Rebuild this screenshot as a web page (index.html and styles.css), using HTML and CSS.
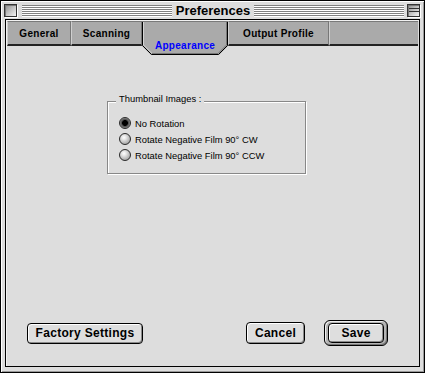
FILE: index.html
```html
<!DOCTYPE html>
<html>
<head>
<meta charset="utf-8">
<link rel="stylesheet" href="styles.css">
</head>
<body>
<div class="window">
  <div class="titlebar">
    <span class="closebox"></span>
    <span class="stripes"></span>
    <span class="title">Preferences</span>
    <span class="stripes"></span>
    <span class="zoombox"></span>
  </div>
  <div class="panel">
    <div class="tabs">
      <div class="tab w1">General</div>
      <div class="tab w2">Scanning</div>
      <div class="tab sel">
        <svg class="selshape" width="86" height="35" viewBox="0 0 86 35">
          <polygon points="0,0 86,0 86,25 77,34 9,34 0,25" fill="#aaaaaa"/>
          <line x1="0" y1="0.5" x2="86" y2="0.5" stroke="#7a7a7a" stroke-width="1"/>
          <polyline points="0.5,1 0.5,24.5 9.5,33.5 76.5,33.5 85.5,24.5 85.5,1" fill="none" stroke="#000" stroke-width="1"/>
          <polyline points="1.5,1 1.5,24 10,32.5" fill="none" stroke="#d4d4d4" stroke-width="1"/>
          <polyline points="10,32.5 76,32.5 84.5,24 84.5,1" fill="none" stroke="#777" stroke-width="1"/>
        </svg>
        <span class="sellabel">Appearance</span>
      </div>
      <div class="tab w4">Output Profile</div>
      <div class="tab rest"></div>
    </div>
    <div class="body">
      <div class="group">
        <div class="legend">Thumbnail Images :</div>
        <div class="radios">
          <div class="radio-row"><span class="radio on"></span><span>No Rotation</span></div>
          <div class="radio-row"><span class="radio"></span><span>Rotate Negative Film 90° CW</span></div>
          <div class="radio-row"><span class="radio"></span><span>Rotate Negative Film 90° CCW</span></div>
        </div>
      </div>
      <div class="buttons">
        <div class="btn factory">Factory Settings</div>
        <div class="btn cancel">Cancel</div>
        <div class="ring"><div class="btn save">Save</div></div>
      </div>
    </div>
  </div>
</div>
</body>
</html>
```

FILE: styles.css
```css
html, body {
  margin: 0;
  padding: 0;
  background: #5a5a8a;
}

.window {
  width: 425px;
  height: 373px;
  box-sizing: border-box;
  border: 1px solid #000;
  background: #dddddd;
  box-shadow: inset 1px 1px 0 #ffffff, inset -1px -1px 0 #999999;
  display: flex;
  flex-direction: column;
  font-family: "Liberation Sans", Arial, sans-serif;
  color: #000;
}

.titlebar {
  height: 18px;
  display: flex;
  align-items: flex-start;
  padding: 3px 4px 0 3px;
  box-sizing: border-box;
}

.closebox, .zoombox {
  width: 13px;
  height: 13px;
  box-sizing: border-box;
  border: 1px solid #333;
  box-shadow: 1px 1px 0 #ffffff, inset 1px 1px 0 #777;
  flex: none;
}

.closebox {
  background: linear-gradient(135deg, #8c8c8c 0%, #bdbdbd 45%, #f4f4f4 100%);
}

.zoombox {
  background:
    linear-gradient(to bottom, transparent 0 3px, #333 3px 4px, transparent 4px 6px, #333 6px 7px, transparent 7px),
    linear-gradient(135deg, #8c8c8c 0%, #bdbdbd 45%, #f4f4f4 100%);
}

.stripes {
  flex: 1;
  height: 12px;
  margin: 1px 4px 0 5px;
  background: repeating-linear-gradient(to bottom, #808080 0 1px, #ffffff 1px 2px);
}

.stripes + .title + .stripes {
  margin: 1px 3px 0 4px;
}

.title {
  font-weight: bold;
  font-size: 13px;
  line-height: 14px;
  flex: none;
}

.panel {
  margin: 0 4px;
  height: 348px;
  box-sizing: border-box;
  border: 1px solid #000;
  padding: 1px;
  background: #dddddd;
  box-shadow: inset 1px 1px 0 #f2f2f2;
  display: flex;
  flex-direction: column;
}

.tabs {
  display: flex;
  align-items: flex-start;
  height: 25px;
  flex: none;
}

.tab {
  height: 25px;
  box-sizing: border-box;
  background: #aaaaaa;
  border-top: 1px solid #7a7a7a;
  border-bottom: 2px solid #222;
  border-left: 1px solid #cfcfcf;
  border-right: 1px solid #777;
  font-weight: bold;
  font-size: 10px;
  letter-spacing: 0.3px;
  line-height: 23px;
  text-align: center;
  flex: none;
}

.w1 { width: 64px; }
.w2 { width: 71px; }
.w4 { width: 101px; }
.rest { width: 89px; border-right: none; }

.tab.sel {
  width: 86px;
  height: 35px;
  margin-bottom: -10px;
  position: relative;
  background: transparent;
  border: none;
  z-index: 1;
}

.selshape {
  position: absolute;
  left: 0;
  top: 0;
  display: block;
}

.sellabel {
  position: relative;
  display: block;
  padding-top: 19px;
  line-height: 12px;
  color: #0000ff;
}

.body {
  flex: 1;
  display: flex;
  flex-direction: column;
}

.group {
  margin: 55px 0 0 100px;
  width: 199px;
  height: 73px;
  box-sizing: border-box;
  border: 1px solid #888888;
  box-shadow: 1px 1px 0 #ffffff, inset 1px 1px 0 #ffffff;
  font-size: 9.4px;
}

.legend {
  width: fit-content;
  margin: -9px 0 0 8px;
  padding: 0 3px;
  line-height: 11px;
  background: #dddddd;
}

.radios {
  margin-top: 11px;
  padding-left: 11px;
}

.radio-row {
  height: 16px;
  display: flex;
  align-items: center;
  gap: 4px;
}

.radio {
  width: 12px;
  height: 12px;
  box-sizing: border-box;
  border-radius: 50%;
  border: 1px solid #2a2a2a;
  background: radial-gradient(circle at 40% 35%, #ffffff 0, #e6e6e6 25%, #a8a8a8 75%, #777 100%);
  flex: none;
}

.radio.on {
  background: radial-gradient(circle at 50% 50%, #000 0 2.6px, #4a4a4a 3.2px, #6e6e6e 4.4px, #999 5px);
}

.buttons {
  margin-top: auto;
  display: flex;
  align-items: center;
  padding: 0 30px 19px 20px;
}

.btn {
  box-sizing: border-box;
  border: 1px solid #000;
  border-radius: 4px;
  background: #dedede;
  box-shadow: inset 1px 1px 0 #ffffff, inset -1px -1px 0 #8a8a8a;
  font-weight: bold;
  font-size: 12px;
  letter-spacing: 0.3px;
  text-align: center;
}

.factory {
  width: 116px;
  height: 21px;
  line-height: 19px;
}

.cancel {
  width: 59px;
  height: 22px;
  line-height: 20px;
  margin-left: auto;
}

.ring {
  margin-left: 19px;
  width: 64px;
  height: 26px;
  box-sizing: border-box;
  border: 1px solid #000;
  border-radius: 6px;
  padding: 2px 3px;
  background: #b4b4b4;
  box-shadow: inset 1px 1px 0 #eeeeee, inset -1px -1px 0 #777;
}

.save {
  width: 56px;
  height: 20px;
  line-height: 18px;
}
```
